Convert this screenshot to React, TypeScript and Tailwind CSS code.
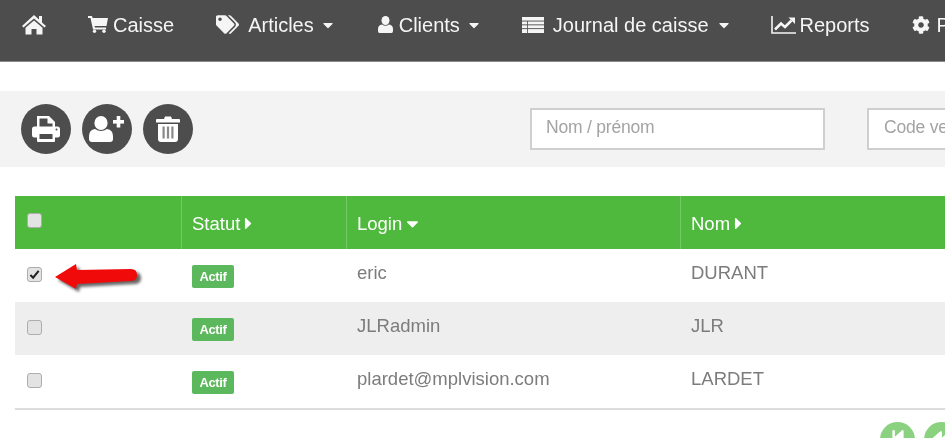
import { FaTags, FaCog, FaCaretDown, FaCaretRight, FaStepBackward, FaBackward } from "react-icons/fa";

const Caret = () => <FaCaretDown className="text-[16px] shrink-0" />;

const HomeIcon = () => (
  <svg viewBox="0 0 24 20" className="w-[24px] h-[20px] shrink-0 fill-current">
    <path d="M12 0 L17 4.5 V1 H20 V7.5 L24 11 L22.5 12.5 L12 3.5 L1.5 12.5 L0 11 Z" />
    <path d="M12 5.5 L20.5 12.7 V19.5 H14.5 V14 H9.5 V19.5 H3.5 V12.7 Z" />
  </svg>
);

const CartIcon = () => (
  <svg viewBox="0 0 20 17" className="w-[20px] h-[17px] shrink-0 fill-current">
    <path d="M0 0 H4 L4.6 2 H20 L18.5 10 H6.5 L6.9 11.5 H18 V13.5 H5 L2.5 2 H0 Z" />
    <circle cx="6.5" cy="15.3" r="1.7" />
    <circle cx="16" cy="15.3" r="1.7" />
  </svg>
);

const UserIcon = () => (
  <svg viewBox="0 0 15 17" className="w-[15px] h-[17px] shrink-0 fill-current">
    <ellipse cx="7.5" cy="4.5" rx="4" ry="4.5" />
    <path d="M1.5 17 Q0 17 0 15 V13 Q0 9 4 8.5 Q7.5 11 11 8.5 Q15 9 15 13 V15 Q15 17 13.5 17 Z" />
  </svg>
);

const ListIcon = () => (
  <svg viewBox="0 0 22 16" className="w-[22px] h-[16px] shrink-0">
    <rect x="0" y="0" width="22" height="16" fill="#f5f5f5" />
    <rect x="0" y="3.6" width="22" height="0.9" fill="#4d4d4d" />
    <rect x="0" y="7.4" width="22" height="0.9" fill="#4d4d4d" />
    <rect x="0" y="11.2" width="22" height="0.9" fill="#4d4d4d" />
    <rect x="5" y="4" width="0.8" height="12" fill="#4d4d4d" />
  </svg>
);

const ChartIcon = () => (
  <svg viewBox="0 0 25 18" className="w-[25px] h-[18px] shrink-0">
    <path d="M1 0 V17 H25" stroke="#f5f5f5" strokeWidth="1.6" fill="none" />
    <path d="M4 13.5 L10 7.5 L14 11 L20.5 4.5" stroke="#f5f5f5" strokeWidth="2.6" fill="none" />
    <path d="M17.5 1.5 H24 V8 Z" fill="#f5f5f5" />
  </svg>
);

const PrintIcon = () => (
  <svg viewBox="0 0 28 26" className="w-[28px] h-[26px]">
    <path d="M5 0 H17 L23 6 V13 H5 Z" fill="#fff" />
    <path d="M7.5 2.5 H15.5 V7.5 H20.5 V13 H7.5 Z" fill="#4d4d4d" />
    <rect x="0" y="10.5" width="28" height="11" rx="2.5" fill="#fff" />
    <rect x="5" y="16" width="18" height="10" rx="1" fill="#fff" />
    <rect x="7.5" y="18" width="13" height="5" fill="#4d4d4d" />
    <circle cx="24.5" cy="13.5" r="1" fill="#4d4d4d" />
  </svg>
);

const UserPlusIcon = () => (
  <svg viewBox="0 0 36 26" className="w-[36px] h-[26px] fill-white">
    <ellipse cx="12" cy="7" rx="6.6" ry="7" />
    <path d="M3 26 Q0 26 0 23 V20 Q0 14 6 13 Q12 17 18 13 Q24 14 24 20 V23 Q24 26 21 26 Z" />
    <rect x="24" y="4" width="11" height="3.6" />
    <rect x="27.7" y="0" width="3.6" height="11.5" />
  </svg>
);

const TrashIcon = () => (
  <svg viewBox="0 0 24 26" className="w-[24px] h-[26px]">
    <path d="M8 3 L9 0.5 H15 L16 3 H23 Q24 3 24 4 V6.5 H0 V4 Q0 3 1 3 Z" fill="#fff" />
    <path d="M2 8 H22 V23 Q22 26 19 26 H5 Q2 26 2 23 Z" fill="#fff" />
    <rect x="6.5" y="10.5" width="2.2" height="12" fill="#8a8a8a" />
    <rect x="10.9" y="10.5" width="2.2" height="12" fill="#8a8a8a" />
    <rect x="15.3" y="10.5" width="2.2" height="12" fill="#8a8a8a" />
  </svg>
);

function Box({ checked }: { checked?: boolean }) {
  return (
    <span className="relative w-[15px] h-[15px] inline-flex items-center justify-center">
      <input type="checkbox" readOnly checked={!!checked} className="appearance-none w-[15px] h-[15px] rounded-[3px] bg-[#e3e3e3] border border-[#adadad]" />
      {checked && (
        <svg viewBox="0 0 12 12" className="absolute left-[2px] top-[2px] w-[11px] h-[11px]">
          <path d="M1.5 6.5 L4.5 9.5 L10.5 2" stroke="#222" strokeWidth="2.2" fill="none" />
        </svg>
      )}
    </span>
  );
}

function Row({ login, nom, checked, bg }: { login: string; nom: string; checked?: boolean; bg: string }) {
  return (
    <div className={`grid grid-cols-[166px_165px_334px_1fr] h-[53px] items-center text-[18.5px] text-[#7c7c7c] ${bg}`}>
      <div className="pl-[12px] pb-[2px] flex items-center relative">
        <Box checked={checked} />
        {checked && (
          <svg viewBox="0 0 86 30" className="absolute left-[40px] top-[-3px] w-[86px] h-[30px] overflow-visible">
            <path d="M0 13 L21 0 L22 6 L76 5 Q83 5 83 11 Q83 17 76 17 L22 20 L21 25 Z" fill="#000" opacity="0.6" transform="translate(3 3)" className="blur-[1.5px]" />
            <path d="M0 13 L21 0 L22 6 L76 5 Q82 5 82 11 Q82 17 76 17 L22 20 L21 25 Z" fill="#f00a0a" />
          </svg>
        )}
      </div>
      <div className="pl-[11px] pb-[2px]">
        <span className="inline-flex items-center justify-center w-[42px] h-[23px] rounded-[2px] bg-[#5cb85c] text-white text-[13px] font-bold tracking-[-0.4px]">Actif</span>
      </div>
      <div className="pl-[11px] pb-[6px]">{login}</div>
      <div className="pl-[11px] pb-[6px]">{nom}</div>
    </div>
  );
}

const circle = "w-[50px] h-[50px] rounded-full bg-[#4d4d4d] flex items-center justify-center";
const field = "h-[42px] w-[295px] shrink-0 bg-white border-2 border-[#cfcfcf] pb-[3px] text-[17.5px] tracking-[-0.2px] placeholder:text-[#a3a3a3] outline-none";

export default function App() {
  return (
    <div className="w-[945px] h-[438px] overflow-hidden bg-white font-['Liberation_Sans',Arial,sans-serif] blur-[0.4px]">
      <nav className="h-[62px] bg-[#4d4d4d] border-b border-[#8a8a8a] flex items-center text-[20px] text-[#f5f5f5] whitespace-nowrap pb-[12px] pl-[22px]">
        <HomeIcon />
        <span className="ml-[42px]"><CartIcon /></span>
        <span className="ml-[5px]">Caisse</span>
        <FaTags className="text-[23px] ml-[42px] shrink-0" />
        <span className="ml-[9px]">Articles</span>
        <span className="ml-[6px]"><Caret /></span>
        <span className="ml-[42px]"><UserIcon /></span>
        <span className="ml-[6px]">Clients</span>
        <span className="ml-[6px]"><Caret /></span>
        <span className="ml-[40px]"><ListIcon /></span>
        <span className="ml-[9px]">Journal de caisse</span>
        <span className="ml-[7px]"><Caret /></span>
        <span className="ml-[39px]"><ChartIcon /></span>
        <span className="ml-[4px]">Reports</span>
        <FaCog className="text-[18px] ml-[42px] shrink-0" />
        <span className="ml-[7px]">Paramètres</span>
      </nav>

      <div className="mt-[29px] h-[76px] bg-[#f3f3f3] flex items-center pl-[21px] whitespace-nowrap">
        <div className="flex gap-[11px] w-[509px] shrink-0">
          <button className={circle}><PrintIcon /></button>
          <button className={circle}><UserPlusIcon /></button>
          <button className={circle}><TrashIcon /></button>
        </div>
        <input placeholder="Nom / prénom" className={`pl-[14px] ${field}`} />
        <input placeholder="Code vendeur" className={`ml-[42px] pl-[15px] ${field}`} />
      </div>

      <div className="mt-[29px] ml-[15px] w-[930px]">
        <div className="grid grid-cols-[166px_165px_334px_1fr] h-[53px] bg-[#4fb93d] text-white text-[18.5px] items-stretch">
          <div className="pl-[12px] flex items-center pb-[5px]">
            <Box />
          </div>
          <div className="pl-[10px] pt-[2px] flex items-center border-l border-[#74c966]">Statut<FaCaretRight className="text-[19px] -ml-[1px]" /></div>
          <div className="pl-[10px] pt-[2px] flex items-center gap-[1px] border-l border-[#74c966]">Login<FaCaretDown className="text-[19px]" /></div>
          <div className="pl-[10px] pt-[2px] flex items-center border-l border-[#74c966]">Nom<FaCaretRight className="text-[19px] -ml-[1px]" /></div>
        </div>
        <Row login="eric" nom="DURANT" checked bg="bg-white" />
        <Row login="JLRadmin" nom="JLR" bg="bg-[#eeeeee]" />
        <Row login="plardet@mplvision.com" nom="LARDET" bg="bg-white" />
        <div className="h-[2px] bg-[#dddddd]" />
        <div className="flex gap-[9px] justify-start pl-[865px] mt-[12px]">
          <div className="w-[35px] h-[35px] rounded-full bg-[#8ad27f] text-white flex items-start justify-center pt-[7px] shrink-0"><FaStepBackward className="text-[18px]" /></div>
          <div className="w-[35px] h-[35px] rounded-full bg-[#8ad27f] text-white flex items-start justify-center pt-[7px] shrink-0"><FaBackward className="text-[18px]" /></div>
        </div>
      </div>
    </div>
  );
}
